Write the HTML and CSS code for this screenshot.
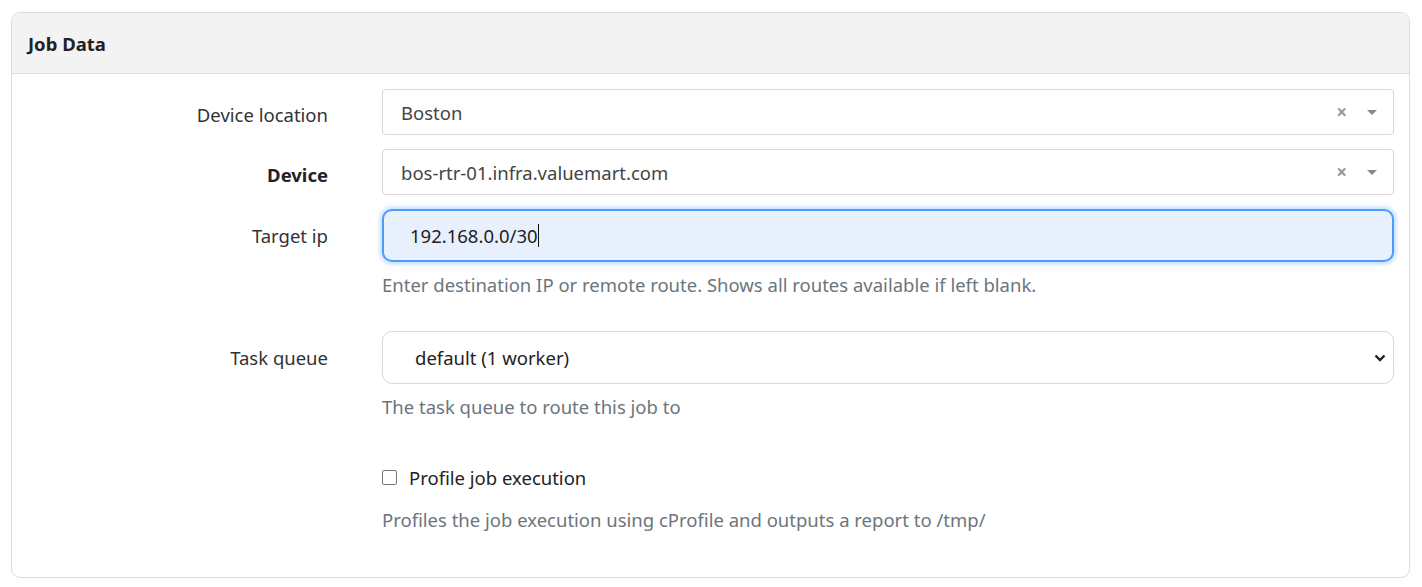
FILE: index.html
```html
<!DOCTYPE html>
<html>
<head>
<meta charset="utf-8">
<link rel="stylesheet" href="styles.css">
</head>
<body>
<div class="card">
  <div class="card-header">Job Data</div>
  <div class="card-body">
    <div class="row">
      <label class="lbl">Device location</label>
      <div class="ctrl">
        <div class="s2">
          <span class="s2-text">Boston</span>
          <span class="s2-clear">×</span>
          <span class="s2-arrow"></span>
        </div>
      </div>
    </div>
    <div class="row">
      <label class="lbl bold">Device</label>
      <div class="ctrl">
        <div class="s2">
          <span class="s2-text">bos-rtr-01.infra.valuemart.com</span>
          <span class="s2-clear">×</span>
          <span class="s2-arrow"></span>
        </div>
      </div>
    </div>
    <div class="row">
      <label class="lbl tall">Target ip</label>
      <div class="ctrl">
        <div class="input focus"><span>192.168.0.0/30</span><span class="caret"></span></div>
        <div class="help">Enter destination IP or remote route. Shows all routes available if left blank.</div>
      </div>
    </div>
    <div class="row">
      <label class="lbl tall">Task queue</label>
      <div class="ctrl">
        <div class="select">
          <span>default (1 worker)</span>
          <svg class="chev" width="12" height="8" viewBox="0 0 12 8"><path d="M1.5 1.5 L6 6 L10.5 1.5" fill="none" stroke="#222" stroke-width="2.4"/></svg>
        </div>
        <div class="help">The task queue to route this job to</div>
      </div>
    </div>
    <div class="row">
      <div class="lbl"></div>
      <div class="ctrl">
        <div class="check"><span class="box"></span><span>Profile job execution</span></div>
        <div class="help">Profiles the job execution using cProfile and outputs a report to /tmp/</div>
      </div>
    </div>
  </div>
</div>
</body>
</html>
```
FILE: styles.css
```css
* { box-sizing: border-box; }
html, body { margin: 0; background: #fff; }
body {
  padding: 12px 12px 10px 11px;
  font-family: "Noto Sans", "Open Sans", sans-serif;
  font-size: 18.5px;
  color: #333;
}
.card {
  border: 1px solid #dcdcdc;
  border-radius: 9px;
  overflow: hidden;
  height: 566px;
}
.card-header {
  height: 61px;
  background: #f3f3f3;
  border-bottom: 1px solid #dcdcdc;
  padding-left: 16px;
  display: flex;
  align-items: center;
  font-weight: 700;
  font-size: 18.5px;
  color: #222;
}
.card-body {
  padding: 15px 15px 0 0;
}
.row {
  display: flex;
  gap: 54px;
  margin-bottom: 14px;
}
.lbl {
  width: 316px;
  flex: none;
  text-align: right;
  height: 46px;
  line-height: 46px;
  padding-top: 3px;
  color: #333;
}
.lbl.tall { height: 53px; line-height: 53px; padding-top: 0; }
.lbl.bold { font-weight: 700; color: #222; }
.ctrl { flex: 1; }
.s2 {
  height: 46px;
  border: 1px solid #d6d6d6;
  border-radius: 4px;
  display: flex;
  align-items: center;
  padding-left: 18px;
  color: #444;
}
.s2-text { flex: 1; }
.s2-clear {
  color: #999;
  font-weight: 700;
  font-size: 19px;
  margin-right: 20px;
}
.s2-arrow {
  width: 0; height: 0;
  border-left: 5px solid transparent;
  border-right: 5px solid transparent;
  border-top: 5px solid #888;
  margin-right: 16px;
}
.input {
  height: 53px;
  border: 2px solid #4b9cff;
  border-radius: 10px;
  background: #e8f0fe;
  box-shadow: 0 0 4px 2px rgba(75, 156, 255, 0.35);
  display: flex;
  align-items: center;
  padding-left: 26px;
  color: #222;
}
.caret {
  display: inline-block;
  width: 1px;
  height: 23px;
  background: #111;
}
.help {
  color: #6c757d;
  margin-top: 11px;
  margin-bottom: 20px;
  line-height: 24px;
}
.select {
  height: 53px;
  border: 1px solid #d9d9d9;
  border-radius: 10px;
  display: flex;
  align-items: center;
  justify-content: space-between;
  padding-left: 32px;
  padding-right: 7px;
  color: #222;
}
.check {
  display: flex;
  align-items: center;
  gap: 12px;
  height: 24px;
  margin-top: 12px;
  color: #222;
}
.box {
  width: 15px; height: 15px;
  border: 1px solid #777;
  border-radius: 2px;
}
.check + .help { margin-top: 19px; }
```
